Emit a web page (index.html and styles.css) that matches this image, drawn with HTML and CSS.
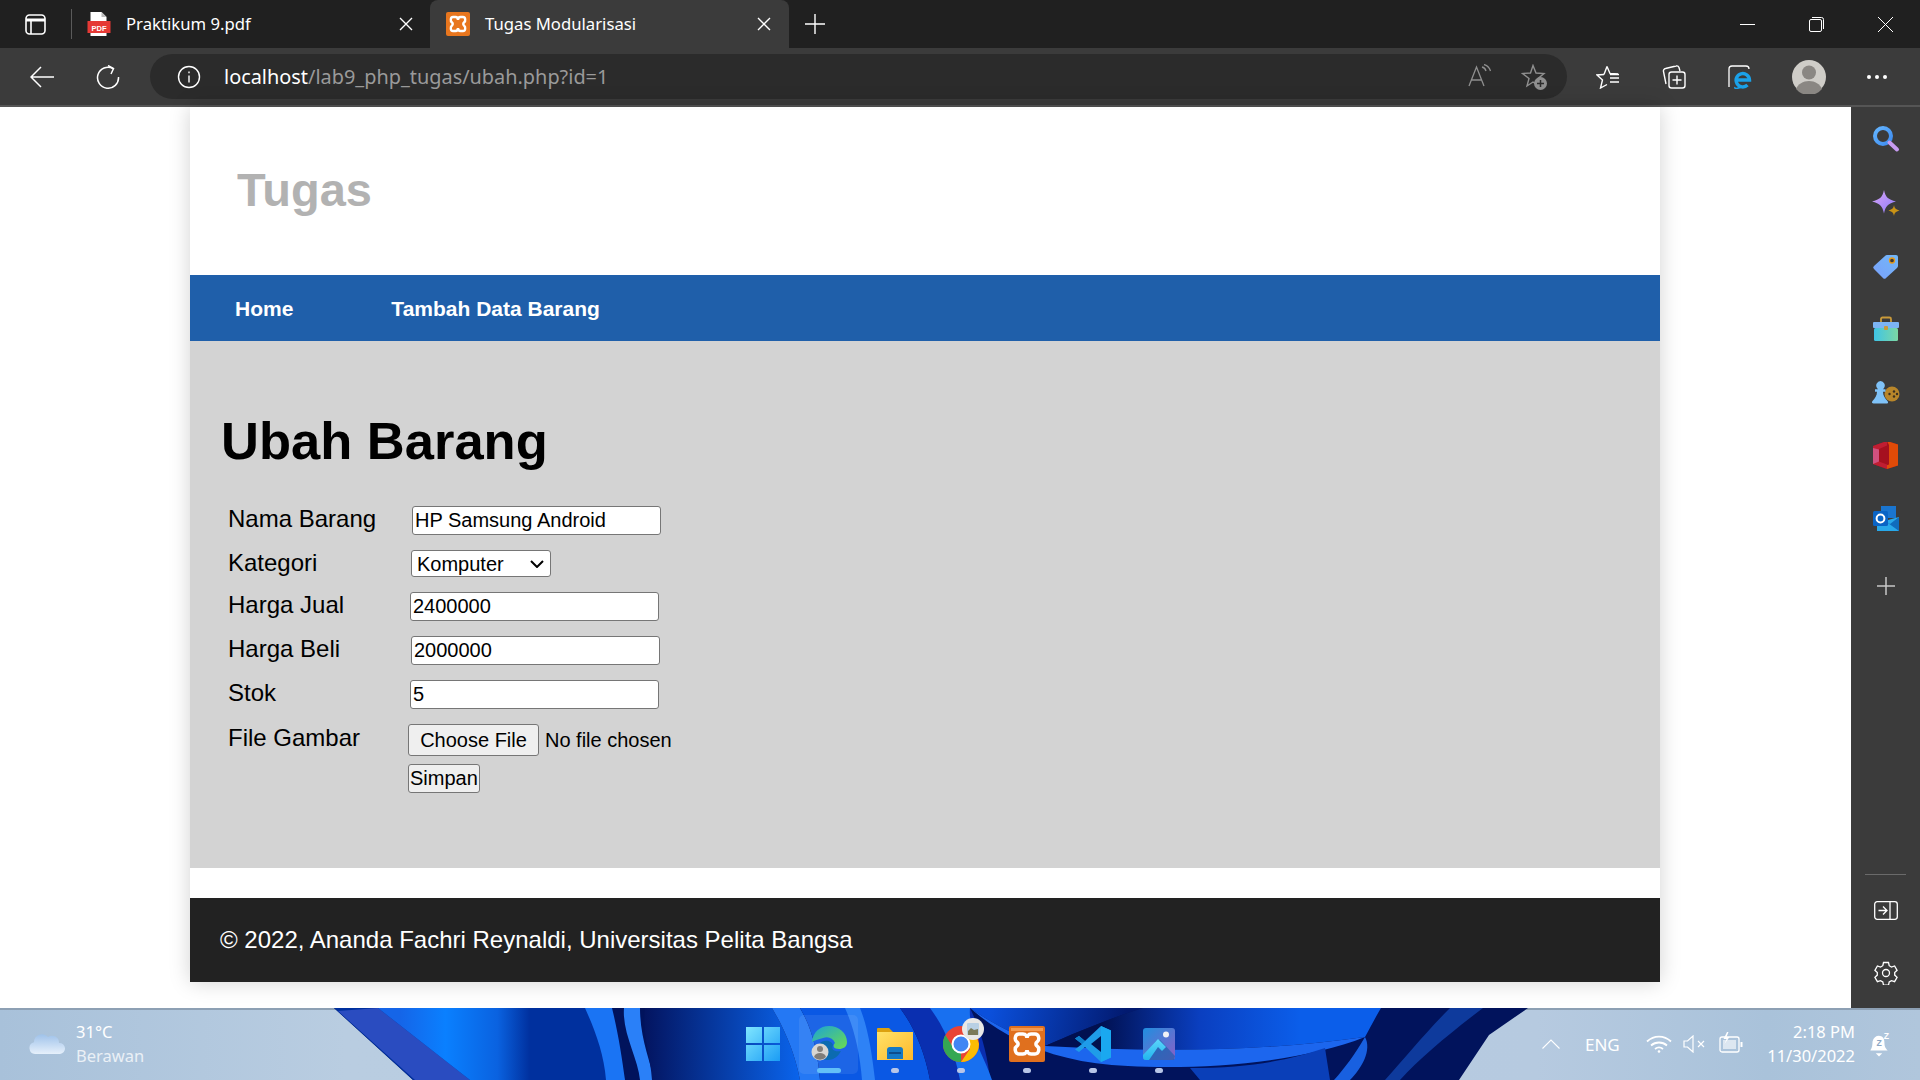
FILE: index.html
```html
<!DOCTYPE html>
<html lang="en">

<head>
    <meta charset="UTF-8">
    <title>Tugas Modularisasi</title>
    <link rel="stylesheet" href="styles.css">
</head>

<body>
    <div class="screen">
        <div class="tabbar">
            <svg class="ico-tabs" viewBox="0 0 21 21" fill="none" stroke="#fff" stroke-width="1.6"><rect x="1" y="1" width="19" height="19" rx="3.5"/><path d="M1 6h19" stroke-width="3"/><path d="M6 6v14"/></svg>
            <div class="tab-sep"></div>
            <div class="tab">
                <svg class="favicon" viewBox="0 0 23 24"><path d="M3 0h11l5 5v8H3z" fill="#fff"/><path d="M14 0l5 5h-5z" fill="#bbb"/><rect x="0" y="9" width="23" height="12" fill="#e53935"/><path d="M3 21h16v3H3z" fill="#fff"/><text x="11.5" y="18.5" class="pdf-label">PDF</text></svg>
                <span class="tab-title">Praktikum 9.pdf</span>
                <svg class="tab-close" viewBox="0 0 14 14" stroke="#fff" stroke-width="1.4"><path d="M1 1l12 12M13 1L1 13"/></svg>
            </div>
            <div class="tab tab-active">
                <svg class="favicon" viewBox="0 0 24 24"><rect width="24" height="24" rx="2" fill="#e8761e"/><path d="M7 5h2.500c2 0 2.500 2 2.500 3 0-1 .5-3 2.500-3H17c2.500 0 3 4 1 5.500-1 .8-1 2.200 0 3C20 15 19.500 19 17 19h-2.500c-2 0-2.500-2-2.500-3 0 1-.5 3-2.500 3H7c-2.500 0-3-4-1-5.500 1-.8 1-2.200 0-3C4 9 4.500 5 7 5z" fill="none" stroke="#fff" stroke-width="2.400"/></svg>
                <span class="tab-title">Tugas Modularisasi</span>
                <svg class="tab-close" viewBox="0 0 14 14" stroke="#fff" stroke-width="1.4"><path d="M1 1l12 12M13 1L1 13"/></svg>
            </div>
            <svg class="ico-plus" viewBox="0 0 20 20" stroke="#fff" stroke-width="1.4"><path d="M10 0v20M0 10h20"/></svg>
            <div class="win-controls">
                <div class="win-btn"><svg viewBox="0 0 15 15" stroke="#fff" stroke-width="1"><path d="M0 7.500h15"/></svg></div>
                <div class="win-btn"><svg viewBox="0 0 15 15" fill="none" stroke="#fff" stroke-width="1"><rect x=".5" y="2.500" width="12" height="12" rx="1.500"/><path d="M3 .5h9.500a2 2 0 0 1 2 2V12"/></svg></div>
                <div class="win-btn"><svg viewBox="0 0 15 15" stroke="#fff" stroke-width="1"><path d="M0 0l15 15M15 0L0 15"/></svg></div>
            </div>
        </div>

        <div class="toolbar">
            <div class="tool-btn"><svg class="ico24" viewBox="0 0 24 24" fill="none" stroke="#fff" stroke-width="1.500"><path d="M24 12H1M11 2L1 12l10 10"/></svg></div>
            <div class="tool-btn"><svg class="ico24" viewBox="0 0 24 24" fill="none" stroke="#fff" stroke-width="1.500"><path d="M17 3.500A10.500 10.500 0 1 0 22.500 12"/><path d="M12 .5L17.500 3.500 15 9"/></svg></div>
            <div class="omnibox">
                <svg class="ico24" viewBox="0 0 24 24" fill="none" stroke="#fff" stroke-width="1.400"><circle cx="12" cy="12" r="10.500"/><path d="M12 10.500v7M12 6.500v1.800"/></svg>
                <div class="url"><span class="url-host">localhost</span>/lab9_php_tugas/ubah.php?id=1</div>
                <div class="omni-actions">
                    <div class="omni-btn"><svg class="ico24" viewBox="0 0 24 24" fill="none" stroke="#8f8f8f" stroke-width="1.300"><path d="M1 22L8.500 3 16 22M3.500 16h10"/><path d="M14 3c2 .5 3.500 2 4 4M16 .5c3 .8 5.500 3 6.500 6.500"/></svg></div>
                    <div class="omni-btn"><svg class="ico26" viewBox="0 0 26 26" fill="none" stroke="#8f8f8f" stroke-width="1.400"><path d="M12 1.500l3 7.500 8 .5-6 5 2 8-7-4.500-6 4 2-7.500-6.500-5 8-.5z"/><circle cx="19.500" cy="19.500" r="6.500" fill="#8f8f8f" stroke="none"/><path d="M19.500 16v7M16 19.500h7" stroke="#2b2b2b" stroke-width="1.500"/></svg></div>
                </div>
            </div>
            <div class="tool-right">
                <div class="tool-btn"><svg class="ico24" viewBox="0 0 24 24" fill="none" stroke="#fff" stroke-width="1.400"><path d="M11 1.500l3 7h-.5L22 9M8 9.500L1 10l5.500 5-2 8 6.500-3.500"/><path d="M11 1.500L8 9.500M14 13h9M14 17h9M14 9.500h9"/></svg></div>
                <div class="tool-btn"><svg class="ico24" viewBox="0 0 24 24" fill="none" stroke="#fff" stroke-width="1.400"><path d="M4 19L1.500 6.500a2.500 2.500 0 0 1 2-3L14 1a2.500 2.500 0 0 1 3 1.500L18 6"/><rect x="7" y="7" width="16" height="16" rx="2.500"/><path d="M15 10.500v9M10.500 15h9"/></svg></div>
                <div class="tool-btn"><svg class="ico24" viewBox="0 0 24 24" fill="none"><path d="M1 22V4a3 3 0 0 1 3-3h14a3 3 0 0 1 3 3" stroke="#fff" stroke-width="1.300"/><path d="M8.500 15h13a6.700 6.700 0 1 0-2 5" stroke="#1ba1e8" stroke-width="3.400"/><path d="M7 22c-1 2 2 2 6 0" stroke="#1ba1e8" stroke-width="1.500"/></svg></div>
                <div class="tool-btn tool-avatar"><svg class="ico34" viewBox="0 0 34 34"><circle cx="17" cy="17" r="17" fill="#cfcdc8"/><circle cx="17" cy="12.500" r="7" fill="#8a8783"/><path d="M4 29c2-5 7-8 13-8s11 3 13 8a17 17 0 0 1-26 0z" fill="#8a8783"/></svg></div>
                <div class="tool-btn tool-dots"><svg class="ico-dots" viewBox="0 0 20 4" fill="#fff"><circle cx="2" cy="2" r="2"/><circle cx="10" cy="2" r="2"/><circle cx="18" cy="2" r="2"/></svg></div>
            </div>
        </div>

        <div class="middle">
            <div class="page">
                <div class="container">
                    <header class="site-header">
                        <div class="site-title">Tugas</div>
                    </header>
                    <nav class="site-nav">
                        <a class="nav-link" href="#">Home</a>
                        <a class="nav-link" href="#">Tambah Data Barang</a>
                    </nav>
                    <main class="content">
                        <h1 class="page-title">Ubah Barang</h1>
                        <form class="form-barang">
                            <div class="form-row">
                                <label class="form-label">Nama Barang</label>
                                <input class="field field-nudge2" type="text" value="HP Samsung Android">
                            </div>
                            <div class="form-row">
                                <label class="form-label">Kategori</label>
                                <select class="field-select">
                                    <option>Komputer</option>
                                    <option>Handphone</option>
                                </select>
                            </div>
                            <div class="form-row">
                                <label class="form-label">Harga Jual</label>
                                <input class="field" type="text" value="2400000">
                            </div>
                            <div class="form-row">
                                <label class="form-label">Harga Beli</label>
                                <input class="field field-nudge1" type="text" value="2000000">
                            </div>
                            <div class="form-row">
                                <label class="form-label">Stok</label>
                                <input class="field" type="text" value="5">
                            </div>
                            <div class="form-row form-row-file">
                                <label class="form-label">File Gambar</label>
                                <input class="field-file" type="file">
                            </div>
                            <div class="form-row">
                                <div class="form-label"></div>
                                <button class="btn-simpan" type="button">Simpan</button>
                            </div>
                        </form>
                    </main>
                    <div class="gap-strip"></div>
                    <footer class="site-footer">© 2022, Ananda Fachri Reynaldi, Universitas Pelita Bangsa</footer>
                </div>
            </div>

            <aside class="sidebar">
                <div class="side-item"><svg class="ico28" viewBox="0 0 28 28"><defs><linearGradient id="gSearch" x1="0" y1="0" x2="1" y2="1"><stop offset="0" stop-color="#64b5ff"/><stop offset="1" stop-color="#3d8bf0"/></linearGradient></defs><circle cx="11" cy="11" r="8" fill="none" stroke="url(#gSearch)" stroke-width="4"/><path d="M17.500 17.500L25 24.500" stroke="#c79bf0" stroke-width="4" stroke-linecap="round"/></svg></div>
                <div class="side-item"><svg class="ico28" viewBox="0 -2 28 28"><defs><linearGradient id="gStar" x1="0" y1="0" x2="1" y2="1"><stop offset="0" stop-color="#dba4f7"/><stop offset="1" stop-color="#8b7cf8"/></linearGradient></defs><path d="M12 0c1.500 7 4 9.500 12 11.500-8 2-10.500 4.500-12 12-1.500-7.500-4-10-12-12C8 9.500 10.500 7 12 0z" fill="url(#gStar)"/><path d="M22 15c.5 3.200 1.500 4.300 5.500 5.500-4 1.200-5 2.300-5.500 5.500-.5-3.200-1.500-4.300-5.500-5.500 4-1.200 5-2.300 5.500-5.500z" fill="#c99316"/></svg></div>
                <div class="side-item"><svg class="ico28" viewBox="0 0 28 28"><defs><linearGradient id="gTag" x1="1" y1="0" x2="0" y2="1"><stop offset="0" stop-color="#72b8f8"/><stop offset="1" stop-color="#7aa0fa"/></linearGradient></defs><path d="M15 3h9a2 2 0 0 1 2 2v9a3 3 0 0 1-1 2L14 26a2 2 0 0 1-3 0L2 17a2 2 0 0 1 0-3L13 4a3 3 0 0 1 2-1z" fill="url(#gTag)"/><circle cx="20" cy="8.500" r="2.500" fill="#3b3b3b" stroke="#e79a18" stroke-width="1.300"/></svg></div>
                <div class="side-item"><svg class="ico28" viewBox="0 0 28 28"><path d="M9 8V4a1.500 1.500 0 0 1 1.500-1.500h7A1.500 1.500 0 0 1 19 4v4" fill="none" stroke="#c99a3a" stroke-width="1.800"/><defs><linearGradient id="gBox" x1="0" y1="0" x2="1" y2="0"><stop offset="0" stop-color="#3fc4e6"/><stop offset="1" stop-color="#7cd8a4"/></linearGradient></defs><rect x="2" y="13" width="24" height="13" rx="1.500" fill="url(#gBox)"/><rect x="1" y="7" width="26" height="6" rx="1" fill="#7cb4f4"/><rect x="12" y="11" width="4" height="4" rx="1" fill="#c99a3a"/></svg></div>
                <div class="side-item"><svg class="ico28" viewBox="0 0 28 28"><circle cx="20" cy="15" r="7.500" fill="#b8862a"/><circle cx="17.500" cy="15" r="1.200" fill="#3b3020"/><circle cx="22" cy="12.500" r="1.200" fill="#3b3020"/><circle cx="22" cy="17.500" r="1.200" fill="#3b3020"/><circle cx="25" cy="15" r="1.200" fill="#3b3020"/><path d="M8.500 2a4.500 4.500 0 0 1 3.500 7l-1 1.200h2.500v2.500H11c0 4 2 6.500 4.500 9.300 1 1.500.5 2.500-1 2.500H1.500c-1.500 0-2-1-1-2.500C3 19.200 5 16.700 5 12.700H3v-2.500h3L5 9a4.500 4.500 0 0 1 3.500-7z" fill="#7fc2f7"/></svg></div>
                <div class="side-item"><svg class="ico28" viewBox="0 1 28 28"><path d="M15 0l11 3.500v21L15 28 1 23V5z" fill="#a5101f"/><path d="M15 0l11 3.500v21L15 28l-1-3.500 3-1V4z" fill="#e04b08"/><path d="M1 5l14-5v4.500L7 8v12.500L15 23.500 15 28 1 23z" fill="#c01e32"/><path d="M1 7l6 1.500v12L1 23z" fill="#d0517f"/></svg></div>
                <div class="side-item"><svg class="ico28" viewBox="0 1 28 28"><path d="M9 1h15v12H9z" fill="#1a75cf"/><path d="M27 12v14H5V21l11-6z" fill="#28a8ea"/><path d="M9 13l9 6 9-7v14z" fill="#0f6cbd"/><rect x="1" y="6" width="15" height="15" rx="1.500" fill="#0a64c5"/><circle cx="8.500" cy="13.500" r="3.900" fill="none" stroke="#fff" stroke-width="2"/></svg></div>
                <div class="side-item side-item-plus"><svg class="ico18" viewBox="0 0 18 18" stroke="#c8c8c8" stroke-width="1.500"><path d="M9 0v18M0 9h18"/></svg></div>
                <div class="side-bottom">
                    <div class="side-sep"></div>
                    <div class="side-item-low"><svg class="ico24" viewBox="0 0 24 20" fill="none" stroke="#fff" stroke-width="1.300"><rect x=".7" y=".7" width="22.600" height="17.600" rx="2.500"/><path d="M16 .7v17.600M4.500 9.500h8M9 5.500l4 4-4 4"/></svg></div>
                    <div class="side-item-low"><svg class="ico24" viewBox="0 0 24 24" fill="none" stroke="#fff" stroke-width="1.300"><circle cx="12" cy="12" r="3.500"/><path d="M9.500 1.500h5l.7 3.200 2.300 1.300 3.100-1 2.500 4.300-2.400 2.200v2.600l2.400 2.200-2.500 4.300-3.100-1-2.300 1.300-.7 3.200h-5l-.7-3.200-2.300-1.300-3.100 1L.9 16.300l2.400-2.200v-2.600L.9 9.300l2.500-4.300 3.100 1 2.300-1.300z"/></svg></div>
                </div>
            </aside>
        </div>

        <div class="taskbar">
            <svg class="wallpaper" viewBox="0 0 1920 72" preserveAspectRatio="none">
                <defs>
                    <linearGradient id="gBar" x1="0" x2="1" y1="0" y2="0"><stop offset="0" stop-color="#a8c1da"/><stop offset=".18" stop-color="#b9cde1"/><stop offset=".8" stop-color="#b6cae0"/><stop offset=".92" stop-color="#a9c2da"/><stop offset="1" stop-color="#b0c6dc"/></linearGradient>
                    <linearGradient id="gWedge" gradientUnits="userSpaceOnUse" x1="400" x2="530" y1="0" y2="0"><stop offset="0" stop-color="#1565e8"/><stop offset=".35" stop-color="#0a80ff"/><stop offset=".75" stop-color="#0a62e0"/><stop offset="1" stop-color="#00309e"/></linearGradient>
                    <linearGradient id="gMid" gradientUnits="userSpaceOnUse" x1="640" x2="800" y1="0" y2="0"><stop offset="0" stop-color="#03125c"/><stop offset="1" stop-color="#0a64ec"/></linearGradient>
                    <linearGradient id="gLeftTop" gradientUnits="userSpaceOnUse" x1="990" x2="1120" y1="0" y2="30"><stop offset="0" stop-color="#0b50dc"/><stop offset="1" stop-color="#021a70"/></linearGradient>
                    <linearGradient id="gRight" gradientUnits="userSpaceOnUse" x1="1100" x2="1300" y1="0" y2="0"><stop offset="0" stop-color="#011050"/><stop offset=".5" stop-color="#0a3fc0"/><stop offset="1" stop-color="#0b5eea"/></linearGradient>
                </defs>
                <rect width="1920" height="72" fill="url(#gBar)"/>
                <rect width="1920" height="2" fill="#8da0b4"/>
                <path d="M334 0H1528L1489 27 1459 72H413z" fill="#01135c"/>
                <path d="M334 0H590L625 72H413z" fill="#00309e"/>
                <path d="M338 3L415 72H470L378 0z" fill="#2a4cc0"/>
                <path d="M378 0H545L530 72H470z" fill="url(#gWedge)"/>
                <path d="M585 0H612C618 24 622 50 625 72H606C604 45 594 20 585 0z" fill="#1a74f4"/>
                <path d="M624 0H640C640 30 650 52 654 72H640C638 50 622 25 624 0z" fill="#2a80f8"/>
                <path d="M645 0H772C784 20 795 45 800 72H652C650 45 642 25 645 0z" fill="url(#gMid)"/>
                <path d="M772 0H800C812 20 818 45 820 72H800C795 45 784 20 772 0z" fill="#2478f4"/>
                <path d="M800 0H900C915 20 925 45 930 72H820C818 45 812 20 800 0z" fill="#0a58e4"/>
                <path d="M845 0H860C868 20 872 45 875 72H862C860 45 854 20 845 0z" fill="#2e82f6"/>
                <path d="M900 0H970C982 25 988 50 990 72H930C925 45 915 20 900 0z" fill="#0a2fb0"/>
                <path d="M930 0H970C968 25 985 50 992 72H960C955 45 945 20 930 0z" fill="#1870f0"/>
                <path d="M970 0H1143C1110 10 1075 25 1045 38 1015 28 990 14 970 0z" fill="url(#gLeftTop)"/>
                <path d="M1143 0H1381C1375 10 1370 20 1365 29 1260 44 1150 44 1045 38 1075 25 1110 10 1143 0z" fill="url(#gRight)"/>
                <path d="M970 0C1010 35 1060 55 1128 58 1200 62 1300 55 1365 29 1260 44 1150 44 1045 38 1015 28 990 14 970 0z" fill="#1c66ee"/>
                <path d="M1190 60C1250 60 1290 52 1325 40L1330 72H1200z" fill="#0a3fb8"/>
                <path d="M1365 29C1372 42 1362 60 1350 72H1334C1345 60 1355 46 1365 29z" fill="#1860e0"/>
                <path d="M1450 0H1483C1450 25 1420 50 1400 72H1385C1405 50 1425 25 1450 0z" fill="#0e3a9c"/>
            </svg>
            <div class="weather">
                <svg class="ico-cloud" viewBox="0 0 36 22"><defs><linearGradient id="gCloud" x1="0" x2="0" y1="0" y2="1"><stop offset="0" stop-color="#9fc2ea"/><stop offset="1" stop-color="#e6f0fb"/></linearGradient></defs><path d="M6 21a6 6 0 0 1-1-11.800A8 8 0 0 1 19 4a7 7 0 0 1 11 6 5.500 5.500 0 0 1 1 11z" fill="url(#gCloud)"/></svg>
                <div class="weather-text">
                    <div class="weather-temp">31°C</div>
                    <div class="weather-desc">Berawan</div>
                </div>
            </div>
            <div class="task-icons">
                <div class="task-icon"><svg class="ico36" viewBox="0 0 36 36"><defs><linearGradient id="gWin" x1="0" y1="0" x2="1" y2="1"><stop offset="0" stop-color="#7fe6ff"/><stop offset="1" stop-color="#1a9cf5"/></linearGradient></defs><path d="M1 1h16v16H1zM19 1h16v16H19zM1 19h16v16H1zM19 19h16v16H19z" fill="url(#gWin)"/></svg></div>
                <div class="task-icon task-icon-active"><svg class="ico36" viewBox="0 0 36 36"><defs><linearGradient id="gEdge" x1="0" y1="0" x2="1" y2="1"><stop offset="0" stop-color="#1ba3d6"/><stop offset="1" stop-color="#6bdc4f"/></linearGradient></defs><path d="M1 16C2 6 9 0 18 0c10 0 18 7 18 16 0 5-4 7-8 7-5 0-7-3-4-6-2-5-7-7-12-5-5 1-9 3-11 4z" fill="url(#gEdge)"/><path d="M9 17c5-4 12-2 13 2-2 5 1 7 8 6-3 6-8 9-13 9C9 34 6 26 9 17z" fill="#0c6bb0"/><circle cx="9" cy="26" r="8.500" fill="#d8d6d2"/><circle cx="9" cy="23" r="3" fill="#807d79"/><path d="M3 31c1-3 3-4 6-4s5 1 6 4a8 8 0 0 1-12 0z" fill="#807d79"/></svg><span class="task-dot task-dot-long"></span></div>
                <div class="task-icon"><svg class="ico36" viewBox="0 0 36 36"><path d="M0 3a1 1 0 0 1 1-1h11l4 4h20v5H0z" fill="#dca10f"/><defs><linearGradient id="gFolder" x1="0" y1="0" x2="1" y2="1"><stop offset="0" stop-color="#ffe268"/><stop offset="1" stop-color="#fdb92b"/></linearGradient></defs><path d="M0 6h36v28H0z" fill="url(#gFolder)"/><path d="M10 33v-9a3 3 0 0 1 3-3h10a3 3 0 0 1 3 3v9z" fill="#1479c6"/><path d="M12 27h12" stroke="#0b3f7a" stroke-width="1.500"/></svg><span class="task-dot"></span></div>
                <div class="task-icon task-icon-chrome"><svg class="ico-chrome" viewBox="0 0 44 44"><circle cx="18" cy="26" r="18" fill="#e94335"/><path d="M18 44A18 18 0 0 1 2.400 17L11 31l7 4z" fill="#34a853"/><path d="M36 26a18 18 0 0 1-18 18l9-13-1-11h8z" fill="#fbbc04"/><circle cx="18" cy="26" r="8.500" fill="#4285f4" stroke="#fff" stroke-width="2"/><circle cx="30" cy="11" r="11" fill="#e8e8e6"/><rect x="24" y="5" width="12" height="12" rx="1" fill="#b8d0e4"/><path d="M25 17v-4l3-3 3 2 4-1v6z" fill="#7b7a58"/></svg><span class="task-dot"></span></div>
                <div class="task-icon"><svg class="ico36" viewBox="0 0 36 36"><rect width="36" height="36" rx="2" fill="#e0701e"/><rect x="2" y="2" width="32" height="3" fill="#f39a50"/><path d="M10 8h4c3 0 4 3 4 4 0-1 1-4 4-4h4c4 0 5 6 2 8-1.500 1-1.500 3 0 4 3 2 2 8-2 8h-4c-3 0-4-3-4-4 0 1-1 4-4 4h-4c-4 0-5-6-2-8 1.500-1 1.500-3 0-4-3-2-2-8 2-8z" fill="none" stroke="#fff" stroke-width="3.500"/></svg><span class="task-dot"></span></div>
                <div class="task-icon"><svg class="ico36" viewBox="0 0 36 36"><path d="M26 0l10 4.500v27L26 36 10 21l-6 5-4-2.500L7 18 0 12.500 4 10l6 5z" fill="#1f9ce8"/><path d="M26 0l10 4.500v27L26 36z" fill="#1aa8f0"/><path d="M26 10v16l-10-8z" fill="#01124e"/><path d="M26 0L10 15l-6-5-4 2.500L7 18l19-18z" fill="#0d7fcb"/></svg><span class="task-dot"></span></div>
                <div class="task-icon"><svg class="ico32" viewBox="0 0 32 32"><defs><linearGradient id="gPhoto" x1="0" y1="0" x2="1" y2="1"><stop offset="0" stop-color="#1f8fe0"/><stop offset="1" stop-color="#8a5fc6"/></linearGradient><linearGradient id="gPeak" x1="0" y1="0" x2="0" y2="1"><stop offset="0" stop-color="#5dd5fa"/><stop offset="1" stop-color="#22b5ee"/></linearGradient></defs><rect width="32" height="32" rx="3" fill="url(#gPhoto)"/><circle cx="23" cy="6.500" r="3" fill="#f2f2f6"/><path d="M0 29l13-16 4-1 15 16-1 4H3z" fill="#0f5ea8" opacity=".6"/><path d="M0 27L15 11l8 8-4 4-4-4L6 32H3a3 3 0 0 1-3-3z" fill="url(#gPeak)"/></svg><span class="task-dot"></span></div>
            </div>
            <div class="tray">
                <svg class="ico-chev" viewBox="0 0 18 10" fill="none" stroke="#fff" stroke-width="1.100"><path d="M.5 9.500L9 1l8.500 8.500"/></svg>
                <span class="tray-lang">ENG</span>
                <svg class="ico-wifi" viewBox="0 0 26 18" fill="none" stroke="#fff" stroke-width="1.800"><path d="M1 6.500c7-6.500 17-6.500 24 0M5 10.500c4.500-4 11.500-4 16 0M9 14c2.500-2 5.500-2 8 0"/><circle cx="13" cy="16.500" r="1.300" fill="#fff" stroke="none"/></svg>
                <svg class="ico-sound" viewBox="0 0 23 18" fill="none" stroke="#fff" stroke-width="1.200"><path d="M1 6h3.500L10 1v16l-5.500-5H1zM15 6l6 6M21 6l-6 6"/></svg>
                <svg class="ico-batt" viewBox="0 0 24 22" fill="none" stroke="#fff" stroke-width="1.300"><rect x="1" y="5" width="19" height="15" rx="2"/><path d="M22.500 10v5" stroke-width="2"/><path d="M4 8h13v9H4z" fill="#fff" stroke="none" opacity=".6"/><path d="M8 0L4.500 7h3l-2 5 5-7h-3l2-5z" fill="#fff" stroke="none"/></svg>
                <div class="clock">
                    <div>2:18 PM</div>
                    <div>11/30/2022</div>
                </div>
                <svg class="ico-bell" viewBox="0 0 22 24" fill="#fff"><path d="M3 18c1-2 2-3 2-8a6 6 0 0 1 7-5.500c3 .5 4 3 4 6 0 4 1 5 3 7.500z"/><path d="M8 20.500h6l-3 3z"/><text x="8.800" y="13.500" class="bell-z">Z</text><text x="15.500" y="7" class="bell-z-out">Z</text></svg>
            </div>
        </div>
    </div>
</body>

</html>
```

FILE: styles.css
```css
* {
    box-sizing: border-box;
}

html,
body {
    margin: 0;
    padding: 0;
    height: 100%;
}

body {
    font-family: 'Liberation Sans', Arial, sans-serif;
    overflow: hidden;
}

svg {
    display: block;
    flex: none;
}

.screen {
    width: 1920px;
    height: 1080px;
    display: flex;
    flex-direction: column;
}

/* browser tab strip */
.tabbar {
    height: 48px;
    background: #202020;
    display: flex;
    align-items: center;
    padding-left: 25px;
    flex: none;
}

.ico-tabs {
    width: 21px;
    height: 21px;
}

.tab-sep {
    width: 1px;
    height: 30px;
    background: #5a5a5a;
    margin-left: 25px;
}

.tab {
    width: 358px;
    height: 48px;
    display: flex;
    align-items: center;
    padding: 0 17px 0 15px;
    color: #fff;
    font-family: 'Noto Sans', sans-serif;
    font-size: 16.700px;
}

.tab-active {
    width: 359px;
    background: #3b3b3b;
    border-radius: 8px 8px 0 0;
    padding: 0 18px 0 16px;
}

.favicon {
    width: 24px;
    height: 24px;
    margin-right: 15px;
}

.pdf-label {
    font-family: 'Liberation Sans', sans-serif;
    font-size: 7.500px;
    font-weight: bold;
    fill: #fff;
    text-anchor: middle;
}

.tab-title {
    flex: 1;
    padding-bottom: 2px;
}

.tab-close {
    width: 14px;
    height: 14px;
}

.ico-plus {
    width: 20px;
    height: 20px;
    margin-left: 16px;
}

.win-controls {
    margin-left: auto;
    display: flex;
}

.win-btn {
    width: 69px;
    height: 48px;
    display: flex;
    align-items: center;
    justify-content: center;
}

.win-btn svg {
    width: 15px;
    height: 15px;
}

/* address bar row */
.toolbar {
    height: 59px;
    background: #3b3b3b;
    border-bottom: 2px solid #555;
    display: flex;
    align-items: center;
    padding: 0 9px;
    flex: none;
}

.tool-btn {
    width: 66px;
    height: 45px;
    display: flex;
    align-items: center;
    justify-content: center;
}

.tool-avatar {
    margin-left: 3px;
}

.tool-dots {
    margin-left: 2px;
}

.tool-right {
    display: flex;
    margin-left: 8px;
}

.ico24 {
    width: 24px;
    height: 24px;
}

.ico26 {
    width: 26px;
    height: 26px;
}

.ico34 {
    width: 34px;
    height: 34px;
}

.ico28 {
    width: 28px;
    height: 28px;
}

.ico18 {
    width: 18px;
    height: 18px;
}

.ico32 {
    width: 32px;
    height: 32px;
}

.ico36 {
    width: 36px;
    height: 36px;
}

.ico-dots {
    width: 20px;
    height: 4px;
}

.omnibox {
    width: 1417px;
    height: 45px;
    margin-left: 9px;
    background: #2b2b2b;
    border-radius: 23px;
    display: flex;
    align-items: center;
    padding: 0 6px 0 27px;
}

.url {
    margin-left: 23px;
    color: #9a9a9a;
    font-family: 'Noto Sans', sans-serif;
    font-size: 19.900px;
}

.url-host {
    color: #fff;
}

.omni-actions {
    margin-left: auto;
    display: flex;
}

.omni-btn {
    width: 54px;
    display: flex;
    justify-content: center;
}

/* page + sidebar */
.middle {
    flex: 1;
    display: flex;
    min-height: 0;
}

.page {
    flex: 1;
    background: #fff;
}

.container {
    width: 1470px;
    margin: 0 0 0 190px;
    box-shadow: 0 0 20px rgba(0, 0, 0, 0.18);
    background: #fff;
    display: flex;
    flex-direction: column;
}

.site-header {
    height: 168px;
    padding: 0 0 4px 47px;
    display: flex;
    align-items: center;
}

.site-title {
    font-size: 47px;
    font-weight: bold;
    color: #b2b2b2;
}

.site-nav {
    height: 66px;
    background: #1f5faa;
    display: flex;
    align-items: center;
    padding: 2px 0 0 45px;
    gap: 98px;
}

.nav-link {
    color: #fff;
    font-size: 21px;
    font-weight: bold;
    text-decoration: none;
}

.content {
    height: 527px;
    background: #d3d3d3;
    padding: 70px 0 0 38px;
}

.page-title {
    margin: 0 0 35px -7px;
    font-size: 52.500px;
    line-height: 60px;
    font-weight: bold;
    color: #000;
}

.form-row {
    display: flex;
    align-items: flex-start;
    margin-bottom: 15px;
}

.form-row-file {
    margin-bottom: 8px;
}

.form-label {
    width: 180px;
    font-size: 24px;
    line-height: 26px;
    color: #000;
    flex: none;
}

.form-row-file .form-label {
    line-height: 28px;
}

.field {
    width: 249px;
    height: 29px;
    margin-left: 2px;
    padding: 1px 2px;
    font-family: 'Liberation Sans', Arial, sans-serif;
    font-size: 20px;
    border: 1px solid #767676;
    border-radius: 3px;
    background: #fff;
}

.field-nudge1 {
    margin-left: 3px;
}

.field-nudge2 {
    margin-left: 4px;
}

.field-select {
    appearance: none;
    width: 140px;
    height: 27px;
    margin-left: 3px;
    padding: 0 0 0 5px;
    font-family: 'Liberation Sans', Arial, sans-serif;
    font-size: 20px;
    border: 1px solid #767676;
    border-radius: 3px;
    background: #fff url("data:image/svg+xml,%3Csvg xmlns='http://www.w3.org/2000/svg' width='14' height='8'%3E%3Cpath d='M1 1l6 6 6-6' fill='none' stroke='%23000' stroke-width='2'/%3E%3C/svg%3E") no-repeat right 6px center;
}

.field-file {
    font-family: 'Liberation Sans', Arial, sans-serif;
    font-size: 20px;
    height: 32px;
}

.field-file::file-selector-button {
    width: 131px;
    height: 32px;
    margin: 0 6px 0 0;
    padding: 0;
    font-size: 20px;
    border: 1px solid #767676;
    border-radius: 3px;
    background: #efefef;
    color: #000;
}

.btn-simpan {
    height: 29px;
    padding: 0 1px;
    font-family: 'Liberation Sans', Arial, sans-serif;
    font-size: 20px;
    border: 1px solid #767676;
    border-radius: 3px;
    background: #efefef;
    color: #000;
}

.gap-strip {
    height: 30px;
    background: #fff;
}

.site-footer {
    height: 84px;
    background: #222;
    color: #fff;
    display: flex;
    align-items: center;
    padding-left: 30px;
    font-size: 24px;
}

.sidebar {
    width: 69px;
    background: #3b3b3b;
    display: flex;
    flex-direction: column;
    padding: 0 0 4px;
    flex: none;
}

.side-item {
    height: 63.500px;
    display: flex;
    align-items: center;
    justify-content: center;
}

.side-item-plus {
    margin-top: 3px;
}

.side-bottom {
    margin-top: auto;
}

.side-sep {
    height: 1px;
    margin: 0 14px 5px;
    background: #6a6a6a;
}

.side-item-low {
    height: 62px;
    display: flex;
    align-items: center;
    justify-content: center;
}

/* windows taskbar */
.taskbar {
    height: 72px;
    position: relative;
    flex: none;
    display: flex;
    color: #fff;
    font-family: 'Noto Sans', sans-serif;
}

.wallpaper {
    position: absolute;
    left: 0;
    top: 0;
    width: 1920px;
    height: 72px;
}

.weather,
.task-icons,
.tray {
    position: relative;
    display: flex;
    align-items: center;
}

.weather {
    padding-left: 29px;
    gap: 11px;
    width: 730px;
    flex: none;
}

.ico-cloud {
    width: 36px;
    height: 22px;
}

.weather-text {
    font-size: 16.500px;
    line-height: 24px;
}

.weather-desc {
    opacity: 0.75;
}

.task-icons {
    height: 72px;
    width: 462px;
    flex: none;
}

.task-icon {
    width: 66px;
    height: 59px;
    display: flex;
    align-items: center;
    justify-content: center;
    position: relative;
}

.task-icon-active::before {
    content: "";
    position: absolute;
    top: 0;
    bottom: 0;
    left: 3px;
    right: 4px;
    border-radius: 5px;
    background: rgba(255, 255, 255, 0.08);
}

.task-icon svg {
    position: relative;
}

.ico-chrome {
    width: 44px;
    height: 44px;
    margin: -8px -8px 0 0;
}

.task-dot {
    position: absolute;
    left: 50%;
    bottom: 1px;
    width: 8px;
    height: 5px;
    margin-left: -4px;
    border-radius: 3px;
    background: #b8c6e8;
}

.task-dot-long {
    width: 24px;
    margin-left: -12px;
    background: #62c0f8;
}

.tray {
    flex: 1;
    padding-left: 350px;
}

.tray-lang {
    font-size: 17px;
    margin-left: 25px;
    width: 34px;
}

.ico-chev {
    width: 18px;
    height: 10px;
}

.ico-wifi {
    width: 26px;
    height: 18px;
    margin-left: 27px;
}

.ico-sound {
    width: 23px;
    height: 18px;
    margin-left: 11px;
}

.ico-batt {
    width: 24px;
    height: 22px;
    margin-left: 13px;
    margin-top: -3px;
}

.clock {
    width: 112px;
    text-align: right;
    font-size: 16.500px;
    line-height: 24px;
}

.ico-bell {
    width: 24px;
    height: 26px;
    margin-left: 12px;
}

.bell-z {
    font-family: 'Liberation Sans', sans-serif;
    font-size: 8px;
    font-weight: bold;
    fill: #8da6c4;
}

.bell-z-out {
    font-family: 'Liberation Sans', sans-serif;
    font-size: 8px;
    font-weight: bold;
    fill: #fff;
}
```
